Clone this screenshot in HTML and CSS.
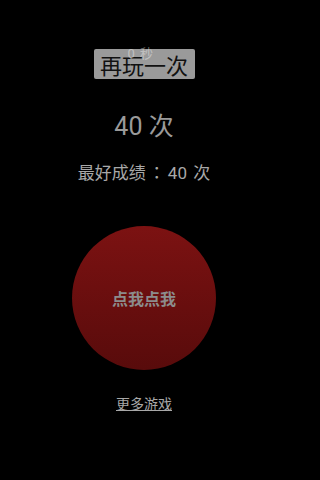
FILE: index.html
```html
<!DOCTYPE html>
<html lang="zh-CN">
<head>
<meta charset="utf-8">
<link rel="stylesheet" href="styles.css">
</head>
<body>
<div class="screen">
  <div class="top">
    <button class="replay">再玩一次</button>
    <span class="timer">0 秒</span>
  </div>
  <div class="count">40 次</div>
  <div class="best">最好成绩<span class="colon" lang="ja">：</span>40 次</div>
  <button class="tap">点我点我</button>
  <a class="more" href="#">更多游戏</a>
</div>
</body>
</html>
```
FILE: styles.css
```css
html, body {
  margin: 0;
  padding: 0;
  background: #000;
}
.screen {
  width: 288px;
  height: 480px;
  display: flex;
  flex-direction: column;
  align-items: center;
  font-family: "Roboto", "Noto Sans CJK SC", sans-serif;
  background: #000;
}
.top {
  position: relative;
  margin-top: 49px;
}
.replay {
  display: block;
  width: 101px;
  height: 30px;
  margin: 0;
  padding: 0;
  border: none;
  border-radius: 2px;
  background: #9a9a9a;
  color: #111;
  font-family: "Noto Sans CJK SC", sans-serif;
  font-size: 22px;
  line-height: 30px;
}
.timer {
  position: absolute;
  left: 34px;
  top: -3px;
  font-family: "Roboto", "Noto Sans CJK SC", sans-serif;
  font-size: 13px;
  line-height: 15px;
  word-spacing: 2px;
  color: rgba(255, 255, 255, 0.4);
  pointer-events: none;
}
.count {
  margin-top: 35px;
  font-size: 25px;
  line-height: 25px;
  color: #9a9a9a;
}
.best {
  margin-top: 24px;
  height: 17px;
  font-size: 17px;
  line-height: 17px;
  color: #a8a8a8;
  white-space: nowrap;
  word-spacing: 2px;
}
.colon {
  display: inline-block;
  width: 22px;
  text-align: center;
  font-family: "Noto Sans CJK JP", sans-serif;
}
.tap {
  margin-top: 46px;
  width: 144px;
  height: 144px;
  border-radius: 50%;
  border: none;
  padding: 0;
  background: linear-gradient(to bottom, #7c1212, #580b0b);
  color: #8c8c8c;
  font-family: "Noto Sans CJK SC", sans-serif;
  font-size: 16px;
  font-weight: bold;
}
.more {
  margin-top: 26px;
  font-family: "Noto Sans CJK SC", sans-serif;
  font-size: 14px;
  line-height: 15px;
  color: #a8a8a8;
  text-decoration: underline;
}
```
